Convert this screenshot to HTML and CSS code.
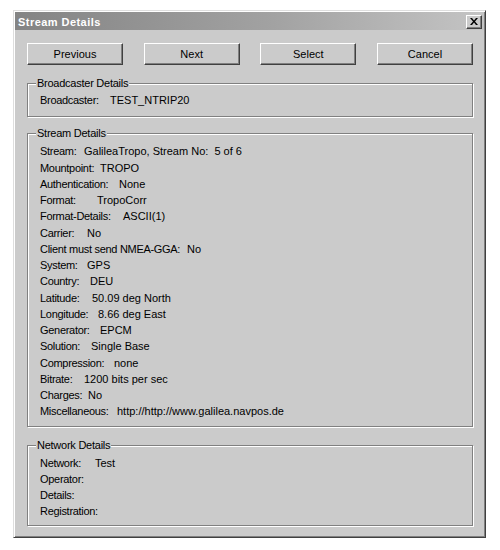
FILE: index.html
```html
<!DOCTYPE html>
<html>
<head>
<meta charset="utf-8">
<link rel="stylesheet" href="styles.css">
</head>
<body>
<div class="window">
  <div class="titlebar">
    <span class="title">Stream Details</span>
    <span class="close"><svg width="8" height="7" viewBox="0 0 8 7"><path d="M0 0h2l2 2.5L6 0h2L5 3.5 8 7H6L4 4.5 2 7H0l3-3.5z" fill="#000"/></svg></span>
  </div>
  <div class="content">
    <div class="buttons">
      <button class="btn">Previous</button>
      <button class="btn">Next</button>
      <button class="btn">Select</button>
      <button class="btn">Cancel</button>
    </div>
    <fieldset class="group group-broadcaster">
      <legend>Broadcaster Details</legend>
      <div class="row"><span class="k" style="width:70px">Broadcaster:</span><span class="v">TEST_NTRIP20</span></div>
    </fieldset>
    <fieldset class="group group-stream">
      <legend>Stream Details</legend>
      <div class="row"><span class="k" style="width:44px">Stream:</span><span class="v">GalileaTropo, Stream No:  5 of 6</span></div>
      <div class="row"><span class="k" style="width:60px">Mountpoint:</span><span class="v">TROPO</span></div>
      <div class="row"><span class="k" style="width:79px">Authentication:</span><span class="v">None</span></div>
      <div class="row"><span class="k" style="width:57px">Format:</span><span class="v">TropoCorr</span></div>
      <div class="row"><span class="k" style="width:83px">Format-Details:</span><span class="v">ASCII(1)</span></div>
      <div class="row"><span class="k" style="width:47px">Carrier:</span><span class="v">No</span></div>
      <div class="row"><span class="k" style="width:147px">Client must send NMEA-GGA:</span><span class="v">No</span></div>
      <div class="row"><span class="k" style="width:47px">System:</span><span class="v">GPS</span></div>
      <div class="row"><span class="k" style="width:50px">Country:</span><span class="v">DEU</span></div>
      <div class="row"><span class="k" style="width:52px">Latitude:</span><span class="v">50.09 deg North</span></div>
      <div class="row"><span class="k" style="width:58px">Longitude:</span><span class="v">8.66 deg East</span></div>
      <div class="row"><span class="k" style="width:60px">Generator:</span><span class="v">EPCM</span></div>
      <div class="row"><span class="k" style="width:51px">Solution:</span><span class="v">Single Base</span></div>
      <div class="row"><span class="k" style="width:74px">Compression:</span><span class="v">none</span></div>
      <div class="row"><span class="k" style="width:44px">Bitrate:</span><span class="v">1200 bits per sec</span></div>
      <div class="row"><span class="k" style="width:48px">Charges:</span><span class="v">No</span></div>
      <div class="row"><span class="k" style="width:77px">Miscellaneous:</span><span class="v">http://http://www.galilea.navpos.de</span></div>
    </fieldset>
    <fieldset class="group group-network">
      <legend>Network Details</legend>
      <div class="row"><span class="k" style="width:55px">Network:</span><span class="v">Test</span></div>
      <div class="row"><span class="k">Operator:</span></div>
      <div class="row"><span class="k">Details:</span></div>
      <div class="row"><span class="k">Registration:</span></div>
    </fieldset>
  </div>
</div>
</body>
</html>
```

FILE: styles.css
```css
* { box-sizing: border-box; }
html, body { margin: 0; padding: 0; background: #fff; }
body {
  font-family: "Liberation Sans", Arial, sans-serif;
  font-size: 11px;
  color: #000;
}
.window {
  margin: 10px 0 0 13px;
  width: 473px;
  height: 528px;
  background: #cbcbcb;
  border: 1px solid;
  border-color: #dedede #404040 #404040 #dedede;
  box-shadow: inset 1px 1px #fff, inset -1px -1px #808080;
  padding: 1px;
  display: flex;
  flex-direction: column;
}
.titlebar {
  height: 18px;
  background: linear-gradient(to right, #848484 0%, #a2a2a2 55%, #c4c4c4 100%);
  display: flex;
  align-items: center;
  justify-content: space-between;
  padding: 1px 2px 0 3px;
}
.title {
  color: #fff;
  font-weight: bold;
  font-size: 11px;
  letter-spacing: 0.45px;
}
.close {
  width: 16px;
  height: 14px;
  background: #cbcbcb;
  border: 1px solid;
  border-color: #fff #404040 #404040 #fff;
  box-shadow: inset -1px -1px #808080;
  display: flex;
  align-items: center;
  justify-content: center;
  padding-bottom: 1px;
}
.content {
  padding: 13px 11px 0 12px;
  display: flex;
  flex-direction: column;
}
.buttons {
  display: flex;
  justify-content: space-between;
  margin-bottom: 12px;
}
.btn {
  width: 96px;
  height: 22px;
  padding: 0;
  background: #cbcbcb;
  border: 1px solid;
  border-color: #fff #404040 #404040 #fff;
  box-shadow: inset -1px -1px #808080;
  font-family: "Liberation Sans", Arial, sans-serif;
  font-size: 11px;
  color: #000;
}
.group {
  margin: 0;
  padding: 3px 8px 6px 8px;
  border: 1px solid #808080;
  box-shadow: inset 1px 1px #fff, 1px 1px #fff;
  min-width: 0;
}
.group legend {
  padding: 0 1px;
  line-height: 13px;
  background: #cbcbcb;
  position: relative;
  letter-spacing: -0.25px;
}
.group-broadcaster { padding-top: 2px; padding-bottom: 8px; }
.group-stream { margin-top: 10px; padding-top: 3px; padding-bottom: 6px; }
.group-network { margin-top: 12px; padding-top: 3px; padding-bottom: 5px; }
.row {
  margin-left: 4px;
  line-height: 16.25px;
  height: 16.25px;
  white-space: pre;
}
.k { display: inline-block; letter-spacing: -0.3px; }
```
